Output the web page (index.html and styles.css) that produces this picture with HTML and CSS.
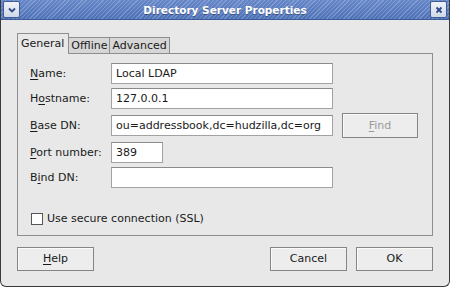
FILE: index.html
```html
<!DOCTYPE html>
<html>
<head>
  <title>Directory Server Properties</title>
  <link rel="stylesheet" href="styles.css">
</head>
<body>
  <div class="window">
    <!-- Title bar -->
    <div class="titlebar">
      <span class="tb-btn">
        <svg viewBox="0 0 10 10" width="10" height="10"><path d="M2 3.5 L5 6.5 L8 3.5" fill="none" stroke="#2c4a8a" stroke-width="1.8"/></svg>
      </span>
      <span class="title">Directory Server Properties</span>
      <span class="tb-btn">
        <svg viewBox="0 0 10 10" width="10" height="10"><path d="M2.5 2.5 L7.5 7.5 M7.5 2.5 L2.5 7.5" fill="none" stroke="#2c4a8a" stroke-width="1.8"/></svg>
      </span>
    </div>

    <div class="dialog">
      <!-- Tabs -->
      <div class="tabs">
        <div class="tab active">General</div>
        <div class="tab">Offline</div>
        <div class="tab">Advanced</div>
      </div>

      <!-- Tab page -->
      <div class="panel">
        <div class="fields">
          <span class="label"><u>N</u>ame:</span>
          <div class="entry">Local LDAP</div>
          <span></span>

          <span class="label">H<u>o</u>stname:</span>
          <div class="entry">127.0.0.1</div>
          <span></span>

          <span class="label"><u>B</u>ase DN:</span>
          <div class="entry">ou=addressbook,dc=hudzilla,dc=org</div>
          <div class="btn disabled"><u>F</u>ind</div>

          <span class="label"><u>P</u>ort number:</span>
          <div class="entry short">389</div>
          <span></span>

          <span class="label">B<u>i</u>nd DN:</span>
          <div class="entry"></div>
          <span></span>
        </div>

        <div class="check">
          <span class="box"></span>
          <span>Use secure connection (SSL)</span>
        </div>
      </div>

      <!-- Dialog buttons -->
      <div class="actions">
        <div class="btn"><u>H</u>elp</div>
        <span class="spacer"></span>
        <div class="btn">Cancel</div>
        <div class="btn">OK</div>
      </div>
    </div>
  </div>
</body>
</html>
```

FILE: styles.css
```css
/* Base */
html, body {
  margin: 0;
  padding: 0;
  background: #ffffff;
  font-family: "DejaVu Sans", Verdana, sans-serif;
  font-size: 11px;
  color: #1a1a1a;
}
u {
  text-decoration: underline;
  text-underline-offset: 2px;
}
/* Window frame */
.window {
  width: 450px;
  height: 287px;
  box-sizing: border-box;
  display: flex;
  flex-direction: column;
  background: #e8e8e8;
  border: 1px solid #3a3a3a;
  border-top: none;
  border-radius: 0 0 6px 6px;
  overflow: hidden;
}
/* Title bar */
.titlebar {
  height: 19px;
  flex-shrink: 0;
  display: flex;
  align-items: center;
  padding: 0 2px 0 2px;
  background:
    repeating-linear-gradient(135deg, rgba(255,255,255,0.2) 0 1px, rgba(255,255,255,0) 1px 3px),
    linear-gradient(#6687c8, #4f72b8);
  border-bottom: 1px solid #3b5a96;
}
.title {
  flex: 1;
  text-align: center;
  color: #ffffff;
  font-weight: bold;
  font-size: 10.5px;
  text-shadow: 0 1px 0 rgba(0,0,0,0.35);
}
.tb-btn {
  width: 15px;
  height: 15px;
  display: flex;
  align-items: center;
  justify-content: center;
  background: linear-gradient(#f1f3f8, #cfd7e8);
  border: 1px solid #3e5c98;
  border-radius: 2px;
}
/* Dialog body */
.dialog {
  flex: 1;
  display: flex;
  flex-direction: column;
  padding: 13px 16px 15px 16px;
}
.tabs {
  display: flex;
  align-items: flex-end;
  height: 20px;
}
.tab {
  height: 15px;
  padding: 0 2px;
  line-height: 15px;
  background: #d6d6d6;
  border: 1px solid #8e8e8e;
  border-bottom: none;
  margin-left: -1px;
}
.tab:first-child {
  margin-left: 0;
}
.tab.active {
  height: 20px;
  line-height: 20px;
  padding: 0 4px 0 3px;
  background: #e8e8e8;
  position: relative;
  z-index: 1;
  margin-bottom: -1px;
}
.panel {
  flex: 1;
  border: 1px solid #8e8e8e;
  padding: 9px 12px 0 12px;
  display: flex;
  flex-direction: column;
}
.fields {
  display: grid;
  grid-template-columns: 72px 222px 76px;
  column-gap: 9px;
  row-gap: 4px;
  align-items: center;
}
.label {
  line-height: 21px;
}
.entry {
  height: 21px;
  box-sizing: border-box;
  line-height: 19px;
  padding: 0 4px;
  background: #ffffff;
  border: 1px solid #a2a2a2;
  border-top-color: #8a8a8a;
  white-space: nowrap;
  overflow: hidden;
}
.entry.short {
  width: 52px;
}
.btn {
  height: 24px;
  box-sizing: border-box;
  line-height: 22px;
  text-align: center;
  background: #ededed;
  border: 1px solid #858585;
  box-shadow: inset 1px 1px 0 #fafafa;
}
.fields .btn {
  height: 25px;
  line-height: 23px;
}
.btn.disabled {
  color: #9a9a9a;
}
/* Checkbox */
.check {
  display: flex;
  align-items: center;
  gap: 4px;
  margin-top: 24px;
  padding-left: 1px;
}
.box {
  width: 10px;
  height: 10px;
  background: #ffffff;
  border: 1px solid #555555;
}
/* Dialog buttons */
.actions {
  display: flex;
  gap: 9px;
  margin-top: 11px;
}
.actions .btn {
  width: 77px;
}
.spacer {
  flex: 1;
}
```
